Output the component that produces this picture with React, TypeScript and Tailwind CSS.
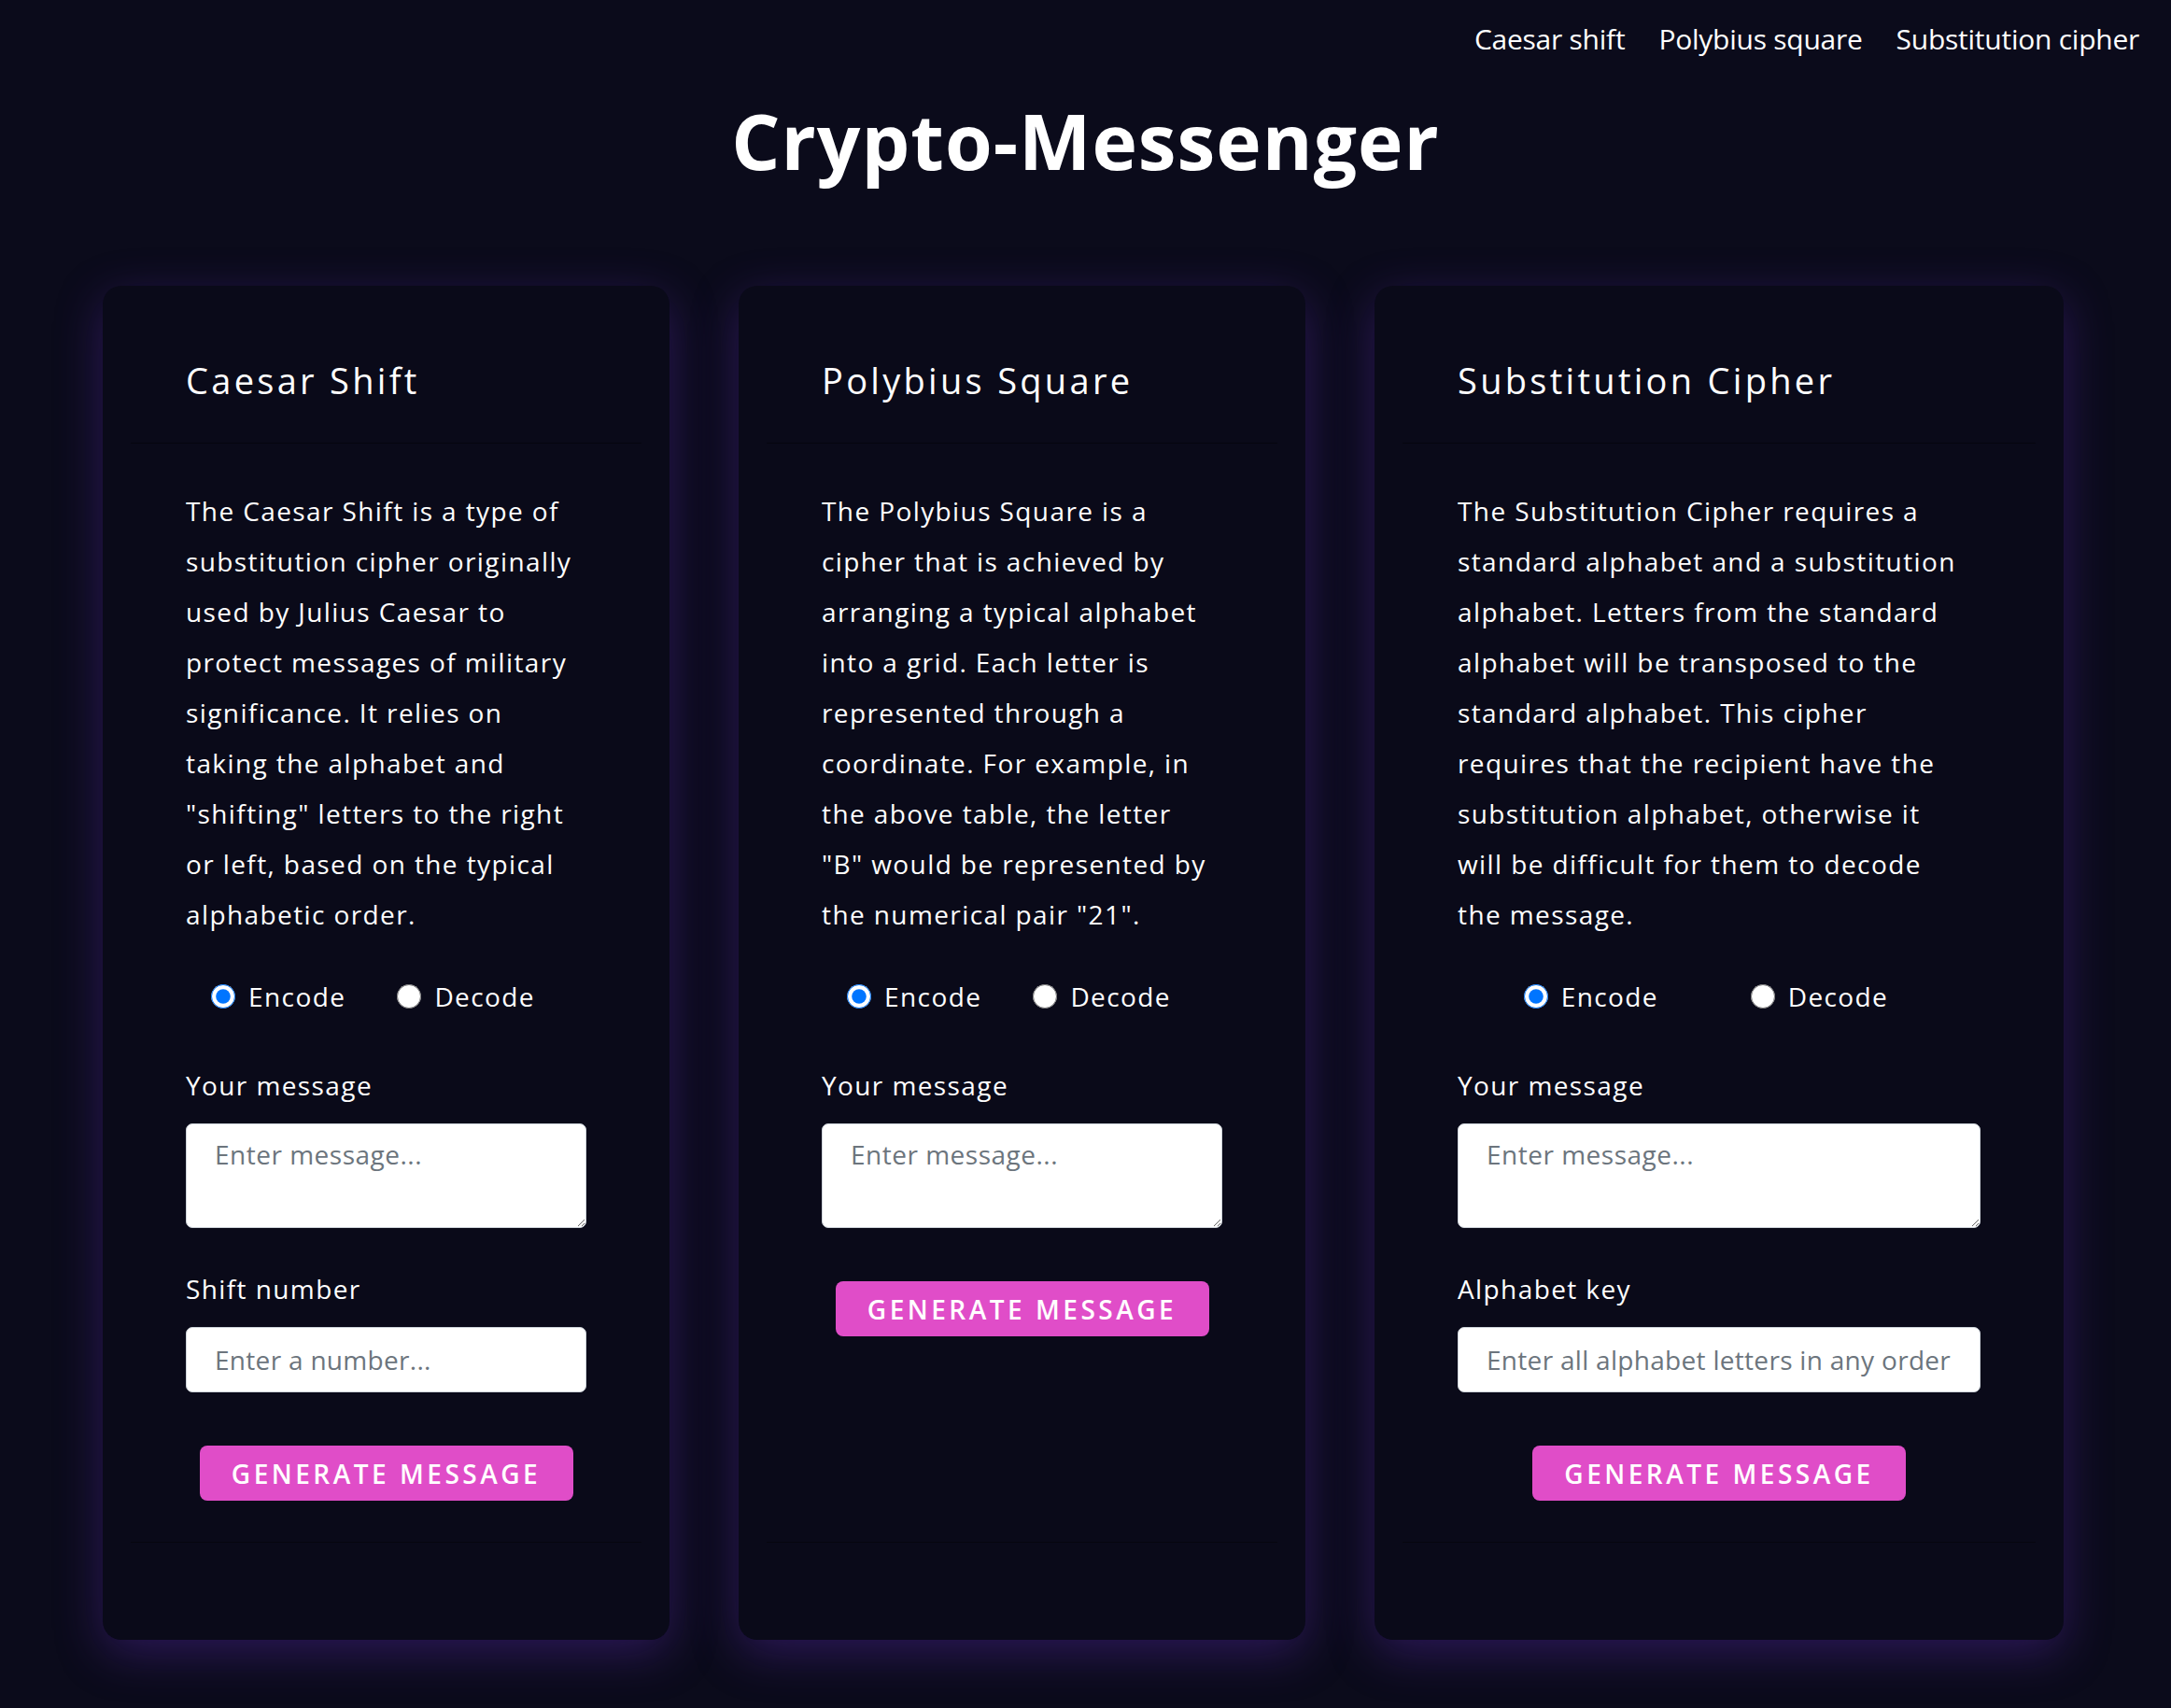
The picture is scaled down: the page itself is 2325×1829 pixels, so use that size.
import { useState } from "react";

type Cipher = {
  id: string;
  title: string;
  lines: string[];
  extra?: { label: string; placeholder: string };
  wide?: boolean;
};

const ciphers: Cipher[] = [
  {
    id: "caesar",
    title: "Caesar Shift",
    lines: [
      "The Caesar Shift is a type of",
      "substitution cipher originally",
      "used by Julius Caesar to",
      "protect messages of military",
      "significance. It relies on",
      "taking the alphabet and",
      "\"shifting\" letters to the right",
      "or left, based on the typical",
      "alphabetic order.",
    ],
    extra: { label: "Shift number", placeholder: "Enter a number..." },
  },
  {
    id: "polybius",
    title: "Polybius Square",
    lines: [
      "The Polybius Square is a",
      "cipher that is achieved by",
      "arranging a typical alphabet",
      "into a grid. Each letter is",
      "represented through a",
      "coordinate. For example, in",
      "the above table, the letter",
      "\"B\" would be represented by",
      "the numerical pair \"21\".",
    ],
  },
  {
    id: "substitution",
    title: "Substitution Cipher",
    lines: [
      "The Substitution Cipher requires a",
      "standard alphabet and a substitution",
      "alphabet. Letters from the standard",
      "alphabet will be transposed to the",
      "standard alphabet. This cipher",
      "requires that the recipient have the",
      "substitution alphabet, otherwise it",
      "will be difficult for them to decode",
      "the message.",
    ],
    extra: {
      label: "Alphabet key",
      placeholder: "Enter all alphabet letters in any order.",
    },
    wide: true,
  },
];

const navLinks = ["Caesar shift", "Polybius square", "Substitution cipher"];

const CipherCard = ({ cipher }: { cipher: Cipher }) => {
  const [mode, setMode] = useState("encode");
  const [message, setMessage] = useState("");
  const [key, setKey] = useState("");

  return (
    <div
      className={
        cipher.wide
          ? "flex w-[738px] flex-col rounded-[20px] bg-[#0a0a19] px-[30px] shadow-[0_14px_50px_rgba(88,40,170,0.42)]"
          : "flex w-[607px] flex-col rounded-[20px] bg-[#0a0a19] px-[30px] shadow-[0_14px_50px_rgba(88,40,170,0.42)]"
      }
    >
      <div className="border-b border-[#06060f] px-[59px] pt-[76px] pb-[42px]">
        <h2 className="text-[38px] leading-[50px] font-medium tracking-[3.3px] text-white">
          {cipher.title}
        </h2>
      </div>

      <div className="flex flex-1 flex-col px-[59px] pt-[45px] pb-[44px]">
        <p className="text-[28px] leading-[54px] tracking-[1.4px] text-white">
          {cipher.lines.map((line) => (
            <span key={line} className="block whitespace-nowrap">
              {line}
            </span>
          ))}
        </p>

        <div className="mt-[41px] flex h-[40px] items-center justify-evenly">
          {["encode", "decode"].map((value) => (
            <label
              key={value}
              className="mr-[28px] flex items-center gap-[14px] text-[28px] tracking-[1.4px] text-white"
            >
              <input
                type="radio"
                name={`${cipher.id}-mode`}
                value={value}
                checked={mode === value}
                onChange={() => setMode(value)}
                className="m-0 h-[26px] w-[26px]"
              />
              {value === "encode" ? "Encode" : "Decode"}
            </label>
          ))}
        </div>

        <label className="mt-[55px] mb-[21px] text-[28px] leading-[40px] tracking-[1.4px] text-white">
          Your message
        </label>
        <textarea
          value={message}
          onChange={(e) => setMessage(e.target.value)}
          placeholder="Enter message..."
          className="block h-[112px] w-full rounded-[7px] border border-[#ced4da] bg-white px-[30px] pt-[12px] text-[28px] leading-[40px] tracking-[0.5px] text-[#212529] outline-none placeholder:text-[#6c757d]"
        />

        {cipher.extra && (
          <>
            <label className="mt-[45px] mb-[21px] text-[28px] leading-[40px] tracking-[1.4px] text-white">
              {cipher.extra.label}
            </label>
            <input
              type="text"
              value={key}
              onChange={(e) => setKey(e.target.value)}
              placeholder={cipher.extra.placeholder}
              className="block h-[70px] w-full rounded-[7px] border border-[#ced4da] bg-white px-[30px] text-[28px] tracking-[0.3px] text-[#212529] outline-none placeholder:text-[#6c757d]"
            />
          </>
        )}

        <button className="mx-auto mt-[57px] flex h-[59px] w-[400px] items-center justify-center rounded-[8px] bg-[#e04dc8] text-[28px] font-semibold tracking-[3.5px] text-white">
          GENERATE MESSAGE
        </button>
      </div>

      <div className="h-[105px] border-t border-[#06060f]" />
    </div>
  );
};

export default function App() {
  return (
    <div className="min-h-screen bg-[#0b0b1b] pb-[64px] font-['Open_Sans',sans-serif]">
      <nav className="flex h-[82px] items-center justify-end gap-[36px] pr-[34px]">
        {navLinks.map((link) => (
          <a
            key={link}
            href="#"
            className="text-[30px] tracking-[-0.25px] text-white"
          >
            {link}
          </a>
        ))}
      </nav>

      <h1 className="mt-[18px] text-center text-[82px] leading-[100px] font-bold tracking-[1px] text-white">
        Crypto-Messenger
      </h1>

      <main className="mt-[106px] flex gap-[74px] pl-[110px]">
        {ciphers.map((cipher) => (
          <CipherCard key={cipher.id} cipher={cipher} />
        ))}
      </main>
    </div>
  );
}
